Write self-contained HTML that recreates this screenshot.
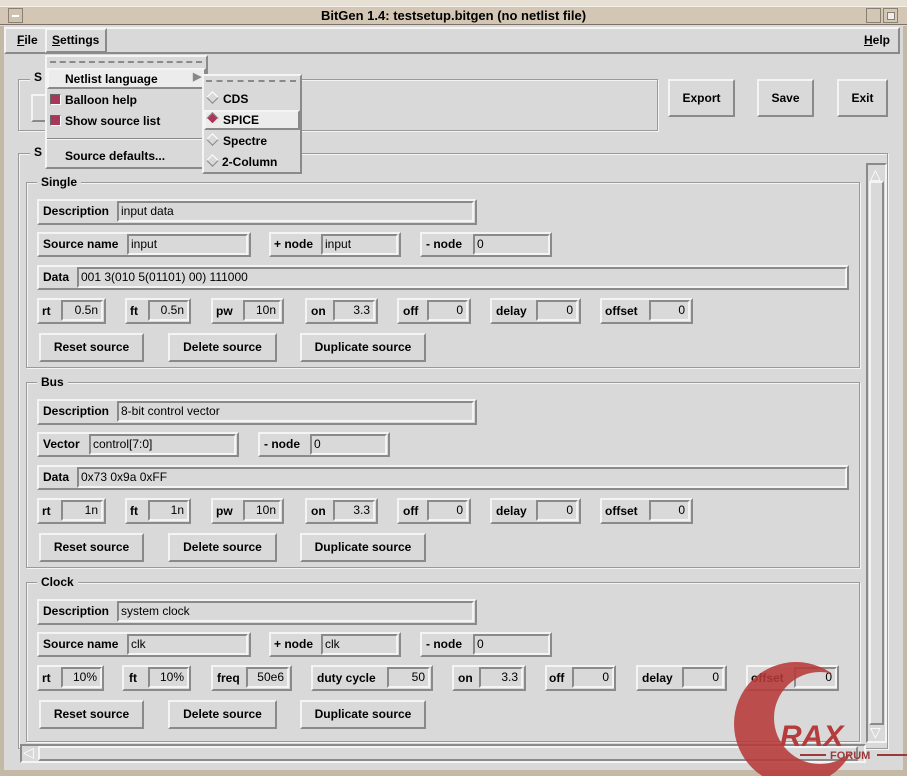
<!DOCTYPE html>
<html><head><meta charset="utf-8"><style>
*{box-sizing:border-box;margin:0;padding:0}
body{width:907px;height:776px;background:#d9d9d9;position:relative;overflow:hidden;font:bold 12px "Liberation Sans",sans-serif;color:#000}
div,span{position:absolute}
.r{border:2px solid;border-color:#f4f4f4 #8a8a8a #8a8a8a #f4f4f4}
.s{border:2px solid;border-color:#8a8a8a #f4f4f4 #f4f4f4 #8a8a8a;background:#d9d9d9;font-weight:normal;padding-left:2px;line-height:16px;white-space:nowrap;overflow:hidden}
.n{text-align:right;padding-right:3px}
.g{border:1px solid #9a9a9a;box-shadow:1px 1px 0 #f4f4f4, inset 1px 1px 0 #f4f4f4}
.lb{background:#d9d9d9;padding:0 4px}
.l{line-height:14px}
.b{text-align:center;line-height:24px}
</style></head><body>
<div style="left:0;top:0;width:907px;height:6px;background:#e6dfd4"></div>
<div style="left:0;top:6px;width:907px;height:19px;background:#d3c6b4;border-top:1px solid #f4efe8;border-bottom:1px solid #7b7166"></div>
<div style="left:8px;top:8px;width:15px;height:15px;border:1px solid #8a8070;background:#cfc2b0"></div>
<div style="left:12px;top:15px;width:7px;height:2px;background:#fff"></div>
<div style="left:0;top:8px;width:907px;text-align:center;font-size:13px;line-height:15px">BitGen 1.4: testsetup.bitgen (no netlist file)</div>
<div style="left:866px;top:8px;width:15px;height:15px;border:1px solid #8a8070"></div>
<div style="left:883px;top:8px;width:15px;height:15px;border:1px solid #8a8070"></div>
<div style="left:887px;top:12px;width:8px;height:8px;border:1px solid #8a8070;background:#eee"></div>
<div style="left:0;top:26px;width:4px;height:750px;background:#c4b8a6"></div>
<div style="left:903px;top:26px;width:4px;height:750px;background:#c4b8a6"></div>
<div style="left:0;top:770px;width:907px;height:6px;background:#c4b8a6"></div>
<div class="r" style="left:4px;top:27px;width:896px;height:27px"></div>
<div style="left:17px;top:33px" class="l"><u>F</u>ile</div>
<div class="r" style="left:45px;top:28px;width:62px;height:25px"></div>
<div style="left:52px;top:33px" class="l"><u>S</u>ettings</div>
<div style="left:864px;top:33px" class="l"><u>H</u>elp</div>
<div class="g" style="left:18px;top:79px;width:640px;height:52px"></div>
<div class="lb l" style="left:30px;top:70px">S</div>
<div class="r" style="left:31px;top:94px;width:20px;height:28px"></div>
<div class="r b" style="left:668px;top:79px;width:67px;height:38px;line-height:34px">Export</div>
<div class="r b" style="left:757px;top:79px;width:57px;height:38px;line-height:34px">Save</div>
<div class="r b" style="left:837px;top:79px;width:51px;height:38px;line-height:34px">Exit</div>
<div class="g" style="left:18px;top:153px;width:870px;height:596px"></div>
<div class="lb l" style="left:30px;top:145px">S</div>
<div class="s" style="left:866px;top:163px;width:21px;height:580px;padding:0"></div>
<div style="left:870px;top:167px;font-weight:normal;color:#fff;font-size:14px;line-height:14px">△</div>
<div class="r" style="left:869px;top:181px;width:15px;height:544px"></div>
<div style="left:870px;top:725px;font-weight:normal;color:#fff;font-size:14px;line-height:14px">▽</div>
<div class="s" style="left:20px;top:744px;width:846px;height:19px;padding:0"></div>
<div style="left:23px;top:745px;font-weight:normal;color:#fff;font-size:14px;line-height:14px">◁</div>
<div class="r" style="left:38px;top:746px;width:820px;height:15px"></div>

<div class="g" style="left:26px;top:182px;width:834px;height:186px"></div>
<div class="lb l" style="left:37px;top:175px">Single</div>
<div class="r" style="left:37px;top:199px;width:440px;height:26px"></div><div style="left:43px;top:204px" class="l">Description</div><div class="s" style="left:117px;top:201px;width:357px;height:21px">input data</div>
<div class="r" style="left:37px;top:232px;width:214px;height:25px"></div><div style="left:43px;top:237px" class="l">Source name</div><div class="s" style="left:127px;top:234px;width:121px;height:21px">input</div>
<div class="r" style="left:269px;top:232px;width:132px;height:25px"></div><div style="left:274px;top:237px" class="l">+ node</div><div class="s" style="left:321px;top:234px;width:77px;height:21px">input</div>
<div class="r" style="left:420px;top:232px;width:132px;height:25px"></div><div style="left:426px;top:237px" class="l">- node</div><div class="s" style="left:473px;top:234px;width:77px;height:21px">0</div>
<div class="r" style="left:37px;top:265px;width:812px;height:25px"></div><div style="left:43px;top:270px" class="l">Data</div><div class="s" style="left:77px;top:267px;width:770px;height:21px">001 3(010 5(01101) 00) 111000</div>
<div class="r" style="left:37px;top:298px;width:69px;height:26px"></div><div style="left:42px;top:304px" class="l">rt</div><div class="s n" style="left:61px;top:300px;width:42px;height:21px">0.5n</div>
<div class="r" style="left:125px;top:298px;width:66px;height:26px"></div><div style="left:130px;top:304px" class="l">ft</div><div class="s n" style="left:148px;top:300px;width:41px;height:21px">0.5n</div>
<div class="r" style="left:211px;top:298px;width:73px;height:26px"></div><div style="left:216px;top:304px" class="l">pw</div><div class="s n" style="left:243px;top:300px;width:38px;height:21px">10n</div>
<div class="r" style="left:305px;top:298px;width:73px;height:26px"></div><div style="left:311px;top:304px" class="l">on</div><div class="s n" style="left:333px;top:300px;width:42px;height:21px">3.3</div>
<div class="r" style="left:397px;top:298px;width:74px;height:26px"></div><div style="left:403px;top:304px" class="l">off</div><div class="s n" style="left:427px;top:300px;width:41px;height:21px">0</div>
<div class="r" style="left:490px;top:298px;width:91px;height:26px"></div><div style="left:496px;top:304px" class="l">delay</div><div class="s n" style="left:536px;top:300px;width:42px;height:21px">0</div>
<div class="r" style="left:600px;top:298px;width:93px;height:26px"></div><div style="left:605px;top:304px" class="l">offset</div><div class="s n" style="left:649px;top:300px;width:41px;height:21px">0</div>
<div class="r b" style="left:39px;top:333px;width:105px;height:29px">Reset source</div>
<div class="r b" style="left:168px;top:333px;width:109px;height:29px">Delete source</div>
<div class="r b" style="left:300px;top:333px;width:126px;height:29px">Duplicate source</div>

<div class="g" style="left:26px;top:382px;width:834px;height:186px"></div>
<div class="lb l" style="left:37px;top:375px">Bus</div>
<div class="r" style="left:37px;top:399px;width:440px;height:26px"></div><div style="left:43px;top:404px" class="l">Description</div><div class="s" style="left:117px;top:401px;width:357px;height:21px">8-bit control vector</div>
<div class="r" style="left:37px;top:432px;width:202px;height:25px"></div><div style="left:43px;top:437px" class="l">Vector</div><div class="s" style="left:89px;top:434px;width:147px;height:21px">control[7:0]</div>
<div class="r" style="left:258px;top:432px;width:132px;height:25px"></div><div style="left:264px;top:437px" class="l">- node</div><div class="s" style="left:310px;top:434px;width:77px;height:21px">0</div>
<div class="r" style="left:37px;top:465px;width:812px;height:25px"></div><div style="left:43px;top:470px" class="l">Data</div><div class="s" style="left:77px;top:467px;width:770px;height:21px">0x73 0x9a 0xFF</div>
<div class="r" style="left:37px;top:498px;width:69px;height:26px"></div><div style="left:42px;top:504px" class="l">rt</div><div class="s n" style="left:61px;top:500px;width:42px;height:21px">1n</div>
<div class="r" style="left:125px;top:498px;width:66px;height:26px"></div><div style="left:130px;top:504px" class="l">ft</div><div class="s n" style="left:148px;top:500px;width:41px;height:21px">1n</div>
<div class="r" style="left:211px;top:498px;width:73px;height:26px"></div><div style="left:216px;top:504px" class="l">pw</div><div class="s n" style="left:243px;top:500px;width:38px;height:21px">10n</div>
<div class="r" style="left:305px;top:498px;width:73px;height:26px"></div><div style="left:311px;top:504px" class="l">on</div><div class="s n" style="left:333px;top:500px;width:42px;height:21px">3.3</div>
<div class="r" style="left:397px;top:498px;width:74px;height:26px"></div><div style="left:403px;top:504px" class="l">off</div><div class="s n" style="left:427px;top:500px;width:41px;height:21px">0</div>
<div class="r" style="left:490px;top:498px;width:91px;height:26px"></div><div style="left:496px;top:504px" class="l">delay</div><div class="s n" style="left:536px;top:500px;width:42px;height:21px">0</div>
<div class="r" style="left:600px;top:498px;width:93px;height:26px"></div><div style="left:605px;top:504px" class="l">offset</div><div class="s n" style="left:649px;top:500px;width:41px;height:21px">0</div>
<div class="r b" style="left:39px;top:533px;width:105px;height:29px">Reset source</div>
<div class="r b" style="left:168px;top:533px;width:109px;height:29px">Delete source</div>
<div class="r b" style="left:300px;top:533px;width:126px;height:29px">Duplicate source</div>

<div class="g" style="left:26px;top:582px;width:834px;height:160px"></div>
<div class="lb l" style="left:37px;top:575px">Clock</div>
<div class="r" style="left:37px;top:599px;width:440px;height:26px"></div><div style="left:43px;top:604px" class="l">Description</div><div class="s" style="left:117px;top:601px;width:357px;height:21px">system clock</div>
<div class="r" style="left:37px;top:632px;width:214px;height:25px"></div><div style="left:43px;top:637px" class="l">Source name</div><div class="s" style="left:127px;top:634px;width:121px;height:21px">clk</div>
<div class="r" style="left:269px;top:632px;width:132px;height:25px"></div><div style="left:274px;top:637px" class="l">+ node</div><div class="s" style="left:321px;top:634px;width:77px;height:21px">clk</div>
<div class="r" style="left:420px;top:632px;width:132px;height:25px"></div><div style="left:426px;top:637px" class="l">- node</div><div class="s" style="left:473px;top:634px;width:77px;height:21px">0</div>
<div class="r" style="left:37px;top:665px;width:67px;height:26px"></div><div style="left:42px;top:671px" class="l">rt</div><div class="s n" style="left:61px;top:667px;width:41px;height:21px">10%</div>
<div class="r" style="left:122px;top:665px;width:69px;height:26px"></div><div style="left:129px;top:671px" class="l">ft</div><div class="s n" style="left:148px;top:667px;width:41px;height:21px">10%</div>
<div class="r" style="left:211px;top:665px;width:81px;height:26px"></div><div style="left:217px;top:671px" class="l">freq</div><div class="s n" style="left:246px;top:667px;width:43px;height:21px">50e6</div>
<div class="r" style="left:311px;top:665px;width:122px;height:26px"></div><div style="left:317px;top:671px" class="l">duty cycle</div><div class="s n" style="left:387px;top:667px;width:43px;height:21px">50</div>
<div class="r" style="left:452px;top:665px;width:74px;height:26px"></div><div style="left:458px;top:671px" class="l">on</div><div class="s n" style="left:479px;top:667px;width:44px;height:21px">3.3</div>
<div class="r" style="left:545px;top:665px;width:71px;height:26px"></div><div style="left:549px;top:671px" class="l">off</div><div class="s n" style="left:572px;top:667px;width:42px;height:21px">0</div>
<div class="r" style="left:636px;top:665px;width:91px;height:26px"></div><div style="left:642px;top:671px" class="l">delay</div><div class="s n" style="left:682px;top:667px;width:42px;height:21px">0</div>
<div class="r" style="left:746px;top:665px;width:93px;height:26px"></div><div style="left:751px;top:671px" class="l">offset</div><div class="s n" style="left:794px;top:667px;width:43px;height:21px">0</div>
<div class="r b" style="left:39px;top:700px;width:105px;height:29px">Reset source</div>
<div class="r b" style="left:168px;top:700px;width:109px;height:29px">Delete source</div>
<div class="r b" style="left:300px;top:700px;width:126px;height:29px">Duplicate source</div>

<svg style="position:absolute;left:720px;top:660px" width="187" height="116" viewBox="0 0 187 116">
<defs><mask id="m"><rect width="187" height="116" fill="#fff"/><circle cx="100" cy="58" r="46" fill="#000"/></mask></defs>
<circle cx="76" cy="64" r="62" fill="#b83a3a" opacity="0.88" mask="url(#m)"/>
<text x="60" y="86" font-family="Liberation Sans" font-weight="bold" font-style="italic" font-size="30" fill="#b53c3c">RAX</text>
<rect x="80" y="94" width="26" height="2" fill="#9a3a3a"/>
<text x="110" y="99" font-family="Liberation Sans" font-weight="bold" font-size="11" fill="#9a3a3a">FORUM</text>
<rect x="157" y="94" width="30" height="2" fill="#9a3a3a"/>
</svg>

<div class="r" style="left:45px;top:55px;width:163px;height:114px;background:#d9d9d9"></div>
<div style="left:50px;top:61px;width:152px;border-top:2px dashed #8a8a8a"></div>
<div class="r" style="left:47px;top:68px;width:159px;height:21px;background:#ececec"></div>
<div style="left:65px;top:72px" class="l">Netlist language</div>
<div style="left:193px;top:70px;font-size:11px;color:#888">▶</div>
<div style="left:50px;top:94px;width:11px;height:11px;background:#a8385a;border:1px solid;border-color:#666 #fff #fff #666"></div>
<div style="left:65px;top:93px" class="l">Balloon help</div>
<div style="left:50px;top:115px;width:11px;height:11px;background:#a8385a;border:1px solid;border-color:#666 #fff #fff #666"></div>
<div style="left:65px;top:114px" class="l">Show source list</div>
<div style="left:47px;top:138px;width:159px;height:2px;border-top:1px solid #8a8a8a;border-bottom:1px solid #f4f4f4"></div>
<div style="left:65px;top:149px" class="l">Source defaults...</div>
<div class="r" style="left:202px;top:74px;width:100px;height:100px;background:#d9d9d9"></div>
<div style="left:206px;top:80px;width:90px;border-top:2px dashed #8a8a8a"></div>
<div style="left:208px;top:93px;width:9px;height:9px;transform:rotate(45deg);border:1px solid;border-color:#fff #888 #888 #fff"></div>
<div style="left:223px;top:92px" class="l">CDS</div>
<div class="r" style="left:204px;top:110px;width:96px;height:20px;background:#ececec"></div>
<div style="left:208px;top:114px;width:9px;height:9px;transform:rotate(45deg);background:#a8385a;border:1px solid;border-color:#888 #fff #fff #888"></div>
<div style="left:223px;top:113px" class="l">SPICE</div>
<div style="left:208px;top:135px;width:9px;height:9px;transform:rotate(45deg);border:1px solid;border-color:#fff #888 #888 #fff"></div>
<div style="left:223px;top:134px" class="l">Spectre</div>
<div style="left:208px;top:156px;width:9px;height:9px;transform:rotate(45deg);border:1px solid;border-color:#fff #888 #888 #fff"></div>
<div style="left:222px;top:155px" class="l">2-Column</div>
</body></html>
